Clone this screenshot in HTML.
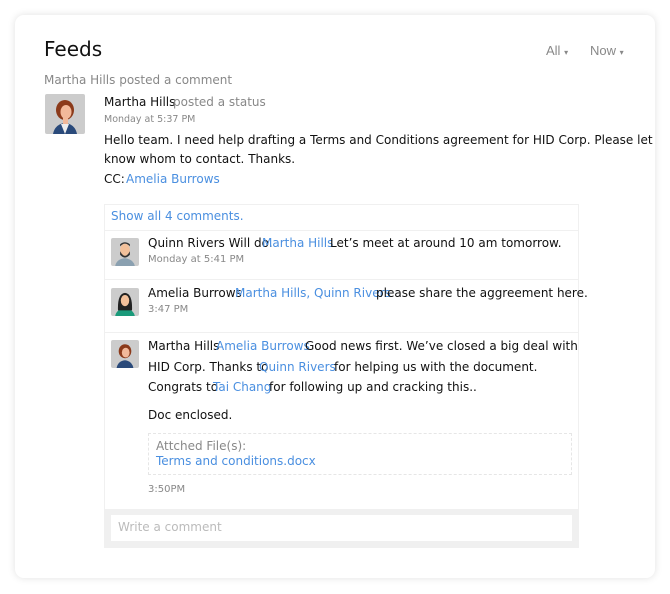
<!DOCTYPE html>
<html><head><style>
body{margin:0;width:670px;height:594px;background:#fff;font-family:"DejaVu Sans","Liberation Sans",sans-serif;font-size:12px;color:#111;position:relative;overflow:hidden}
.card{position:absolute;left:15px;top:15px;width:640px;height:563px;border-radius:9px;box-shadow:0 0 8px rgba(0,0,0,.12);background:#fff}
.a{position:absolute;white-space:nowrap}
.g{color:#888}.l{color:#4a8fe0}.s{font-size:9.5px;color:#888}
.box{position:absolute;left:104px;top:204px;width:475px;height:344px;border:1px solid #f0f0f0;box-sizing:border-box}
.hr{position:absolute;left:105px;width:474px;height:1px;background:#f0f0f0}
.av{position:absolute;border-radius:2px;overflow:hidden}
</style></head><body>
<div class="card"></div>
<div class="a" style="left:44px;top:37px;font-size:20px;color:#111">Feeds</div>
<div class="a" style="left:546px;top:43px;font-family:'Liberation Sans',sans-serif;font-size:13px;color:#888">All <span style="font-size:8px">▾</span></div>
<div class="a" style="left:590px;top:43px;font-family:'Liberation Sans',sans-serif;font-size:13px;color:#888">Now <span style="font-size:8px">▾</span></div>
<div class="a g" style="left:44px;top:73px">Martha Hills posted a comment</div>

<svg class="av" style="left:45px;top:94px" width="40" height="40" viewBox="0 0 40 40"><rect width="40" height="40" fill="#ccc"/><path d="M8 40 Q10 30 20 29 Q30 30 32 40Z" fill="#2a4a7a"/><path d="M16 30 L20 40 L24 30Z" fill="#eee"/><ellipse cx="20" cy="16" rx="9" ry="10" fill="#8b3a1a"/><ellipse cx="21" cy="18" rx="5.5" ry="7" fill="#f2b99a"/><rect x="18" y="24" width="5" height="6" fill="#f2b99a"/></svg>
<div class="a" style="left:104px;top:95px">Martha Hills</div>
<div class="a g" style="left:173px;top:95px">posted a status</div>
<div class="a s" style="left:104px;top:114px">Monday at 5:37 PM</div>
<div class="a" style="left:104px;top:131px;line-height:19px">Hello team. I need help drafting a Terms and Conditions agreement for HID Corp. Please let<br>know whom to contact. Thanks.</div>
<div class="a" style="left:104px;top:172px">CC:</div>
<div class="a l" style="left:126px;top:172px">Amelia Burrows</div>

<div class="box"></div>
<div class="a l" style="left:111px;top:209px">Show all 4 comments.</div>
<div class="hr" style="top:230px"></div>

<svg class="av" style="left:111px;top:238px" width="28" height="28" viewBox="0 0 40 40"><rect width="40" height="40" fill="#ccc"/><path d="M6 40 Q8 30 20 29 Q32 30 34 40Z" fill="#8aa0b0"/><ellipse cx="20" cy="17" rx="7" ry="9" fill="#f2c09a"/><path d="M13 12 Q20 4 27 12 L27 9 Q20 3 13 9Z" fill="#333"/><path d="M13 19 Q20 32 27 19 L27 24 Q20 32 13 24Z" fill="#333"/></svg>
<div class="a" style="left:148px;top:236px">Quinn Rivers Will do.</div>
<div class="a l" style="left:262px;top:236px">Martha Hills</div>
<div class="a" style="left:330px;top:236px">Let’s meet at around 10 am tomorrow.</div>
<div class="a s" style="left:148px;top:254px;font-size:10px">Monday at 5:41 PM</div>
<div class="hr" style="top:279px"></div>

<svg class="av" style="left:111px;top:288px" width="28" height="28" viewBox="0 0 40 40"><rect width="40" height="40" fill="#ccc"/><path d="M6 40 Q8 30 20 29 Q32 30 34 40Z" fill="#1a9a7a"/><path d="M10 32 Q9 8 20 7 Q31 8 30 32Z" fill="#222"/><ellipse cx="20" cy="18" rx="6" ry="8" fill="#f2c09a"/></svg>
<div class="a" style="left:148px;top:286px">Amelia Burrows</div>
<div class="a l" style="left:235px;top:286px">Martha Hills, Quinn Rivers</div>
<div class="a" style="left:376px;top:286px">please share the aggreement here.</div>
<div class="a s" style="left:148px;top:304px;font-size:10px">3:47 PM</div>
<div class="hr" style="top:332px"></div>

<svg class="av" style="left:111px;top:340px" width="28" height="28" viewBox="0 0 40 40"><rect width="40" height="40" fill="#ccc"/><path d="M8 40 Q10 30 20 29 Q30 30 32 40Z" fill="#2a4a7a"/><ellipse cx="20" cy="16" rx="9" ry="10" fill="#8b3a1a"/><ellipse cx="21" cy="18" rx="5.5" ry="7" fill="#f2b99a"/></svg>
<div class="a" style="left:148px;top:339px">Martha Hills</div>
<div class="a l" style="left:216px;top:339px">Amelia Burrows</div>
<div class="a" style="left:305px;top:339px">Good news first. We’ve closed a big deal with</div>
<div class="a" style="left:148px;top:359.5px">HID Corp. Thanks to</div>
<div class="a l" style="left:259px;top:359.5px">Quinn Rivers</div>
<div class="a" style="left:334px;top:359.5px">for helping us with the document.</div>
<div class="a" style="left:148px;top:380px">Congrats to</div>
<div class="a l" style="left:213px;top:380px">Tai Chang</div>
<div class="a" style="left:269px;top:380px">for following up and cracking this..</div>
<div class="a" style="left:148px;top:408px">Doc enclosed.</div>
<div class="a" style="left:148px;top:433px;width:424px;height:42px;border:1px dashed #e6e6e6;box-sizing:border-box"></div>
<div class="a g" style="left:156px;top:439px">Attched File(s):</div>
<div class="a l" style="left:156px;top:454px">Terms and conditions.docx</div>
<div class="a s" style="left:148px;top:484px;font-size:10px">3:50PM</div>
<div class="a" style="left:104px;top:509px;width:475px;height:39px;background:#f0f0f0"></div>
<div class="a" style="left:111px;top:515px;width:461px;height:26px;background:#fff"></div>
<div class="a" style="left:118px;top:520px;color:#bbb">Write a comment</div>
</body></html>
